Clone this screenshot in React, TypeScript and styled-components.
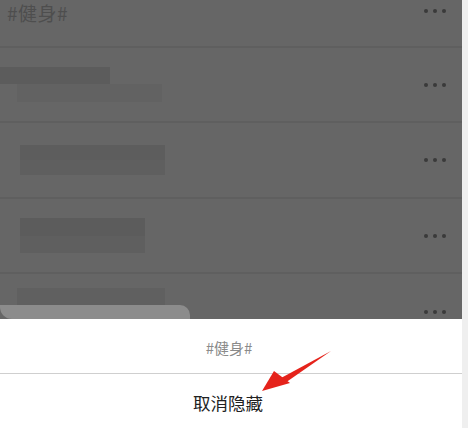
import React from "react";
import styled, { createGlobalStyle } from "styled-components";

const Global = createGlobalStyle`
  html, body { margin: 0; padding: 0; background: #ffffff; }
  body { font-family: "Noto Sans CJK SC", "Noto Sans", sans-serif; }
`;

const Frame = styled.div`
  width: 468px;
  height: 428px;
  display: flex;
  overflow: hidden;
`;

const Main = styled.div`
  width: 462px;
  display: flex;
  flex-direction: column;
  position: relative;
`;

const Strip = styled.div`
  width: 6px;
  background: #efefef;
`;

const Overlay = styled.div`
  height: 319px;
  background: #666666;
  display: flex;
  flex-direction: column;
  position: relative;
`;

const Row = styled.div<{ $h: number; $line?: boolean }>`
  height: ${(p) => p.$h}px;
  box-sizing: border-box;
  display: flex;
  align-items: center;
  justify-content: space-between;
  padding: 0 16px 0 0;
  border-bottom: ${(p) => (p.$line ? "2px solid #5f5f5f" : "none")};
  position: relative;
`;

const TitleRow = styled(Row)`
  align-items: flex-start;
  padding-top: 3px;
`;

const TagTitle = styled.span`
  color: #4e4e4e;
  font-size: 19px;
  line-height: 19px;
  padding-left: 7px;
  letter-spacing: 0.5px;
`;

const Dots = styled.div<{ $top?: number }>`
  display: flex;
  gap: 5px;
  margin-top: ${(p) => p.$top ?? 0}px;
  margin-left: auto;
`;

const Dot = styled.span`
  width: 4px;
  height: 4px;
  border-radius: 50%;
  background: #3a3a3a;
`;

const Blur = styled.div`
  display: flex;
  flex-direction: column;
  align-self: stretch;
  justify-content: center;
`;

const Block = styled.div<{ $w: number; $h: number; $x: number; $c: string }>`
  width: ${(p) => p.$w}px;
  height: ${(p) => p.$h}px;
  margin-left: ${(p) => p.$x}px;
  background: ${(p) => p.$c};
`;

const Bottom = styled.div`
  position: absolute;
  left: 0;
  bottom: 0;
  width: 190px;
  height: 14px;
  background: #8c8c8c;
  border-radius: 0 10px 0 12px;
`;

const Sheet = styled.div`
  flex: 1;
  background: #ffffff;
  display: flex;
  flex-direction: column;
`;

const SheetTitle = styled.div`
  height: 55px;
  display: flex;
  align-items: center;
  justify-content: center;
  color: #8a8a8a;
  font-size: 15px;
  border-bottom: 1px solid #cfcfcf;
  box-sizing: border-box;
  padding-top: 2px;
  padding-right: 4px;
`;

const Action = styled.div`
  flex: 1;
  display: flex;
  align-items: center;
  justify-content: center;
  color: #222222;
  font-size: 17.5px;
  padding-top: 2px;
  padding-right: 6px;
`;

const Arrow = styled.svg`
  position: absolute;
  left: 255px;
  top: 345px;
`;

const More = ({ top }: { top?: number }) => (
  <Dots $top={top}>
    <Dot />
    <Dot />
    <Dot />
  </Dots>
);

export default function App() {
  return (
    <>
      <Global />
      <Frame>
        <Main>
          <Overlay>
            <TitleRow $h={48} $line>
              <TagTitle>#健身#</TagTitle>
              <More top={6} />
            </TitleRow>
            <Row $h={75} $line>
              <Blur>
                <Block $w={110} $h={17} $x={0} $c="#5c5c5c" />
                <Block $w={145} $h={18} $x={17} $c="#626262" />
              </Blur>
              <More />
            </Row>
            <Row $h={76} $line>
              <Blur>
                <Block $w={145} $h={15} $x={20} $c="#5d5d5d" />
                <Block $w={145} $h={15} $x={20} $c="#5f5f5f" />
              </Blur>
              <More />
            </Row>
            <Row $h={75} $line>
              <Blur>
                <Block $w={125} $h={18} $x={20} $c="#5c5c5c" />
                <Block $w={125} $h={17} $x={20} $c="#5f5f5f" />
              </Blur>
              <More />
            </Row>
            <Row $h={45}>
              <Blur>
                <Block $w={148} $h={18} $x={17} $c="#606060" />
              </Blur>
              <More top={30} />
            </Row>
            <Bottom />
          </Overlay>
          <Sheet>
            <SheetTitle>#健身#</SheetTitle>
            <Action>取消隐藏</Action>
          </Sheet>
          <Arrow width="80" height="50" viewBox="0 0 80 50">
            <path d="M76 6 L26 33 L30 38 Z" fill="#e5231b" />
            <path d="M7 46 L19 26 L35 38 Z" fill="#e5231b" />
          </Arrow>
        </Main>
        <Strip />
      </Frame>
    </>
  );
}
